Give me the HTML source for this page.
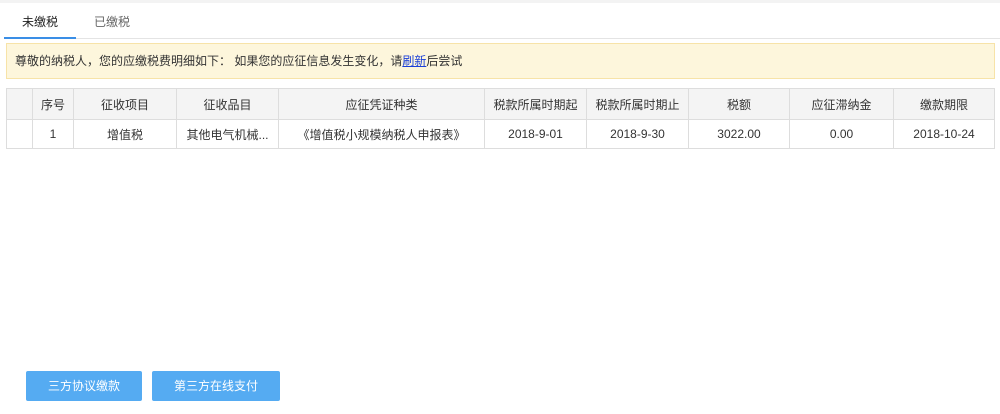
<!DOCTYPE html>
<html><head><meta charset="utf-8"><style>
*{margin:0;padding:0;box-sizing:border-box}
body{width:1000px;height:414px;background:#fff;font-family:"Liberation Sans","Noto Sans CJK SC",sans-serif;font-size:12px;color:#333;position:relative;overflow:hidden}
.top{position:absolute;left:0;top:0;width:1000px;height:3px;background:#f3f3f3}
.tabs{position:absolute;left:4px;top:3px;right:0;height:36px;border-bottom:1px solid #e4e4e4}
.tab{position:absolute;top:10px;font-size:12px}
.t1{left:18px;color:#222}
.t2{left:90px;color:#666}
.ul{position:absolute;left:0;width:72px;bottom:-1px;height:2px;background:#3a8ee6}
.notice{position:absolute;left:6px;top:43px;width:989px;height:36px;background:#fdf6dc;border:1px solid #f7e3a8;line-height:34px;padding-left:8px;color:#333}
.notice a{color:#1a3fd8;text-decoration:underline}
table{position:absolute;left:6px;top:88px;border-collapse:collapse;width:989px}
td,th{border:1px solid #ddd;text-align:center;font-weight:normal;color:#333}
th{background:#f4f4f4;height:31px}
td{height:29px;background:#fff}
.btn{position:absolute;top:371px;height:30px;background:#55abf2;color:#fff;text-align:center;line-height:30px;border-radius:2px;font-size:12px}
</style></head><body>
<div class="top"></div>
<div class="tabs"><span class="tab t1">未缴税</span><span class="tab t2">已缴税</span><div class="ul"></div></div>
<div class="notice">尊敬的纳税人，您的应缴税费明细如下： 如果您的应征信息发生变化，请<a>刷新</a>后尝试</div>
<table>
<tr><th style="width:26px"></th><th style="width:41px">序号</th><th style="width:103px">征收项目</th><th style="width:102px">征收品目</th><th style="width:206px">应征凭证种类</th><th style="width:102px">税款所属时期起</th><th style="width:102px">税款所属时期止</th><th style="width:101px">税额</th><th style="width:104px">应征滞纳金</th><th>缴款期限</th></tr>
<tr><td></td><td>1</td><td>增值税</td><td>其他电气机械...</td><td>《增值税小规模纳税人申报表》</td><td>2018-9-01</td><td>2018-9-30</td><td>3022.00</td><td>0.00</td><td>2018-10-24</td></tr>
</table>
<div class="btn" style="left:26px;width:116px">三方协议缴款</div>
<div class="btn" style="left:152px;width:128px">第三方在线支付</div>
</body></html>
